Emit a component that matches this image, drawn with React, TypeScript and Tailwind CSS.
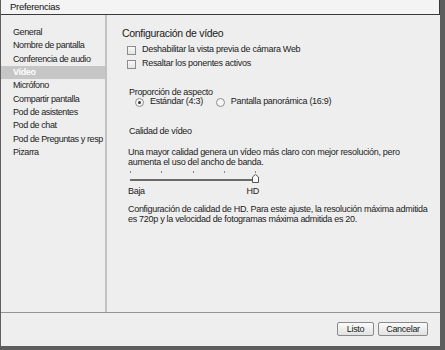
const sections = [
  "General",
  "Nombre de pantalla",
  "Conferencia de audio",
  "Vídeo",
  "Micrófono",
  "Compartir pantalla",
  "Pod de asistentes",
  "Pod de chat",
  "Pod de Preguntas y resp",
  "Pizarra",
];

const font = { fontFamily: '"Liberation Sans", Arial, sans-serif' };

function Checkbox({ label }: { label: string }) {
  return (
    <label className="flex h-[14px] items-center">
      <span className="h-[9px] w-[9px] border border-[#8c8c8c] bg-gradient-to-b from-[#f8f8f8] to-[#e4e4e4]" />
      <span className="ml-[6px]">{label}</span>
    </label>
  );
}

function Radio({ label, checked }: { label: string; checked?: boolean }) {
  return (
    <span className="flex items-center">
      <span className="flex h-[9px] w-[9px] items-center justify-center rounded-full border border-[#8c8c8c] bg-[#f6f6f6]">
        {checked && <span className="h-[3px] w-[3px] rounded-full bg-[#333]" />}
      </span>
      <span className="ml-[6px]">{label}</span>
    </span>
  );
}

export default function App() {
  return (
    <div className="h-[350px] w-[445px] bg-[#5d5d5d]" style={font}>
      <div className="flex h-[346px] w-[440px] flex-col border-l border-[#5d5d5d] bg-[#eeeeee] text-[9px] tracking-[-0.3px] text-[#222]">
        {/* barra de título */}
        <div className="h-[15px] border-b border-r border-[#3a3a3a] bg-[#f4f4f4] pl-[9px] text-[9.5px] leading-[14px] text-[#111]">
          Preferencias
        </div>

        <div className="flex flex-1">
          {/* lista de secciones */}
          <div className="w-[106px] shrink-0 border-r-2 border-[#c2c2c2] pt-[11px] tracking-[-0.4px]">
            {sections.map((s) => (
              <div
                key={s}
                className={`h-[13.33px] whitespace-nowrap pl-[12px] leading-[13.33px] ${
                  s === "Vídeo" ? "bg-[#c6c6c6] font-bold text-white" : ""
                }`}
              >
                {s}
              </div>
            ))}
          </div>

          {/* ajustes de vídeo */}
          <div className="flex-1 pl-[15px] pt-[12px]">
            <h2 className="text-[10.5px] leading-[13px] text-[#1a1a1a]">
              Configuración de vídeo
            </h2>
            <div className="ml-[5px] mt-[3px]">
              <Checkbox label="Deshabilitar la vista previa de cámara Web" />
              <Checkbox label="Resaltar los ponentes activos" />
            </div>

            <div className="ml-[7px] mt-[16px] leading-[10px]">Proporción de aspecto</div>
            <div className="ml-[13px] flex h-[10px] items-center gap-[13px]">
              <Radio label="Estándar (4:3)" checked />
              <Radio label="Pantalla panorámica (16:9)" />
            </div>

            <div className="ml-[7px] mt-[18px] leading-[12px]">Calidad de vídeo</div>

            <p className="ml-[6px] mt-[10px] w-[285px] leading-[10px]">
              Una mayor calidad genera un vídeo más claro con mejor resolución, pero aumenta el uso
              del ancho de banda.
            </p>

            <div className="ml-[8px] mt-[4px] w-[128px]">
              <div className="flex justify-between pr-[2px]">
                {[0, 1, 2, 3, 4].map((i) => (
                  <span key={i} className="h-[2px] w-px bg-[#888]" />
                ))}
              </div>
              <div className="relative mt-[6px] h-[2px] w-[126px] bg-[#6a6a6a]">
                <svg
                  className="absolute -top-[5px] right-[-3px]"
                  width="7"
                  height="9"
                  viewBox="0 0 7 9"
                >
                  <path d="M0.5 8.5 V3 L3.5 0.5 L6.5 3 V8.5 Z" fill="#fafafa" stroke="#555" />
                </svg>
              </div>
            </div>
            <div className="ml-[6px] mt-[5px] flex w-[131px] justify-between leading-[10px]">
              <span>Baja</span>
              <span>HD</span>
            </div>

            <p className="ml-[6px] mt-[8px] w-[306px] leading-[10px]">
              Configuración de calidad de HD. Para este ajuste, la resolución máxima admitida es 720p
              y la velocidad de fotogramas máxima admitida es 20.
            </p>
          </div>
        </div>

        {/* botones */}
        <div className="flex h-[34px] justify-end gap-[4px] border-t border-[#939393] pr-[12px] pt-[9px]">
          <button className="h-[14px] w-[37px] rounded-[2px] border border-[#8a8a8a] bg-gradient-to-b from-[#fafafa] to-[#e2e2e2] text-[9px] leading-[12px]">
            Listo
          </button>
          <button className="h-[14px] w-[50px] rounded-[2px] border border-[#8a8a8a] bg-gradient-to-b from-[#fafafa] to-[#e2e2e2] text-[9px] leading-[12px]">
            Cancelar
          </button>
        </div>
      </div>
    </div>
  );
}
